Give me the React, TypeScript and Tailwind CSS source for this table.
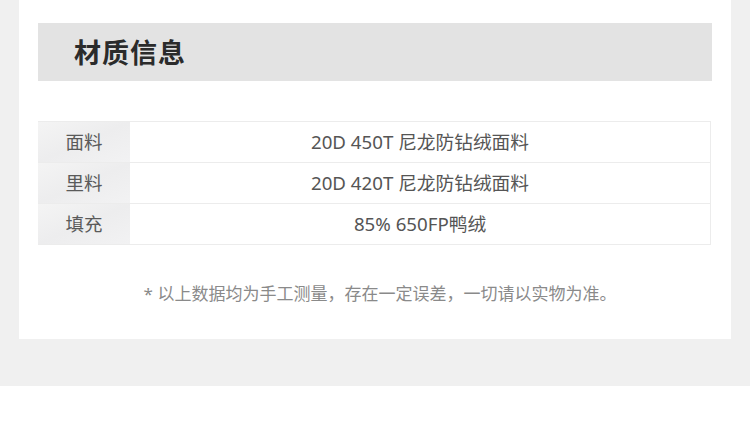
export default function App() {
  const rows = [
    ["面料", "20D 450T 尼龙防钻绒面料"],
    ["里料", "20D 420T 尼龙防钻绒面料"],
    ["填充", "85% 650FP鸭绒"],
  ];
  const font = { fontFamily: '"Noto Sans", "Noto Sans CJK SC", sans-serif' };
  return (
    <div className="w-[750px] h-[423px] bg-white" style={font}>
      <div className="h-[386px] bg-[#f0f0f0] px-[19px]">
        <div className="h-[339px] bg-white pt-[23px] px-[19px]">
          <div className="h-[58px] bg-[#e3e3e3] flex items-center pl-[36px]">
            <span className="text-[27px] font-bold text-[#2b2b2b] tracking-[1px]" style={{ fontFamily: '"Noto Sans CJK SC", sans-serif' }}>
              材质信息
            </span>
          </div>
          <div className="mt-[40px] w-[673px] border-t border-[#ececec] border-r">
            {rows.map(([k, v]) => (
              <div key={k} className="flex h-[41px] border-b border-[#ececec]">
                <div className="w-[92px] bg-gradient-to-br from-[#f4f4f4] via-[#ededee] to-[#f2f2f3] flex items-center justify-center text-[18.5px] text-[#5a5a5a]">
                  {k}
                </div>
                <div className="flex-1 flex items-center justify-center text-[18.7px] text-[#555]">
                  {v}
                </div>
              </div>
            ))}
          </div>
          <div className="mt-[36px] pl-[10px] text-center text-[17px] text-[#8a8a8a]">
            * 以上数据均为手工测量，存在一定误差，一切请以实物为准。
          </div>
        </div>
      </div>
    </div>
  );
}
